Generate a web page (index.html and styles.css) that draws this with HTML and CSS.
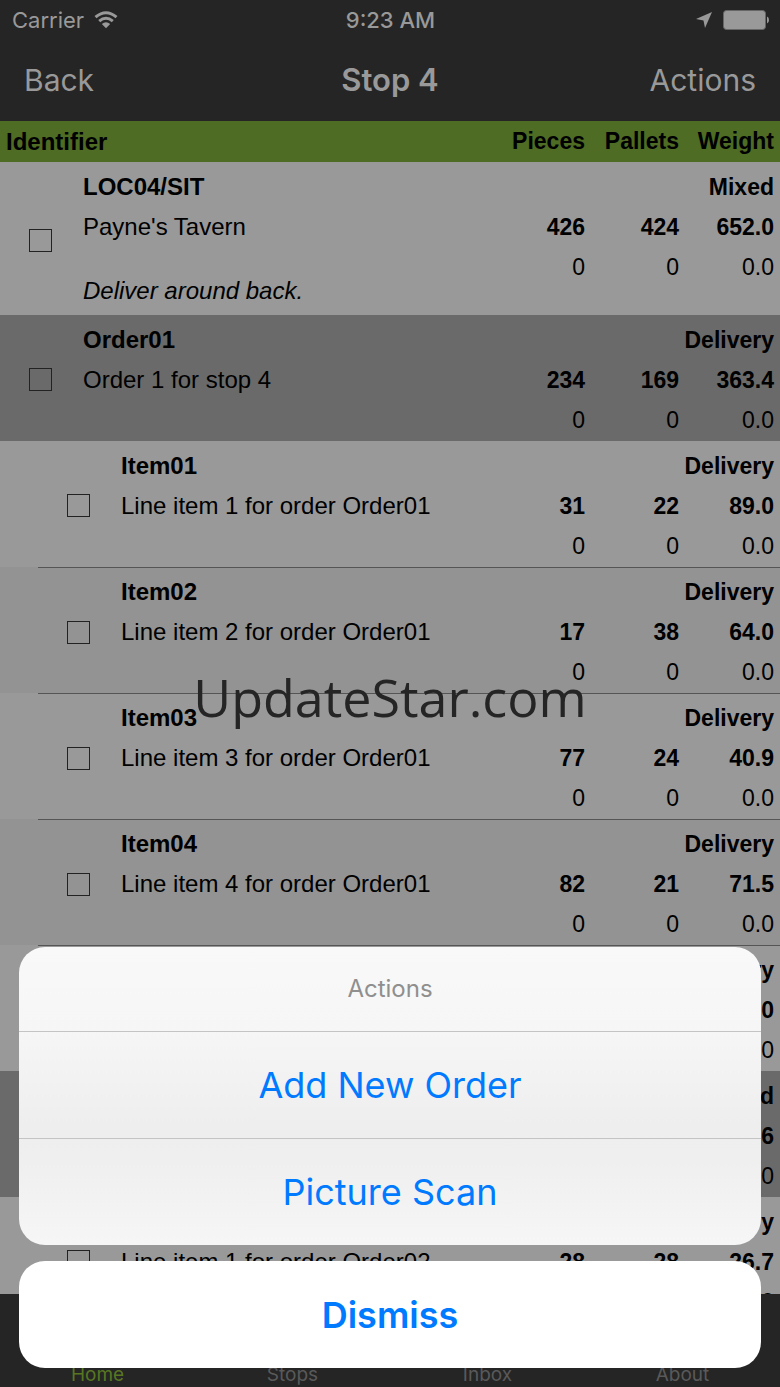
FILE: index.html
```html
<!DOCTYPE html>
<html lang="en">
<head>
    <meta charset="UTF-8">
    <meta name="viewport" content="width=device-width, initial-scale=1.0">
    <title>Stop 4</title>
    <link rel="stylesheet" href="styles.css">
</head>
<body>
    <div class="screen">
        <div class="status-bar">
            <div class="carrier">
                <span>Carrier</span>
                <svg class="wifi" viewBox="0 0 24 18" width="24" height="18" aria-hidden="true">
                    <path d="M1.500 6.200Q12 -2.800 22.500 6.200" />
                    <path d="M5.200 10.200Q12 4.400 18.800 10.200" />
                    <path class="dot" d="M7.800 13Q12 9.300 16.200 13L12 17.200Z" />
                </svg>
            </div>
            <div class="clock">9:23 AM</div>
            <div class="status-icons">
                <svg viewBox="0 0 16 16" width="16" height="16" aria-hidden="true">
                    <path d="M0 7L16 0L9 16L7.500 8.500Z" fill="#999" />
                </svg>
                <svg viewBox="0 0 46 20" width="46" height="20" aria-hidden="true">
                    <rect x="0.500" y="0.500" width="42" height="19" rx="3" fill="#999" stroke="#666" />
                    <path d="M44 6.500Q46 7 46 10T44 13.500Z" fill="#999" />
                </svg>
            </div>
        </div>

        <header class="nav-bar">
            <button class="nav-btn">Back</button>
            <h1>Stop 4</h1>
            <button class="nav-btn right">Actions</button>
        </header>

        <main class="list">
            <table>
                <colgroup>
                    <col class="col-gutter">
                    <col class="col-check">
                    <col class="col-gutter">
                    <col>
                    <col class="col-num">
                    <col class="col-num">
                    <col class="col-weight">
                </colgroup>
                <thead>
                    <tr>
                        <th colspan="4" class="identifier">Identifier</th>
                        <th>Pieces</th>
                        <th>Pallets</th>
                        <th>Weight</th>
                    </tr>
                </thead>
                <tbody class="stop">
                    <tr class="first">
                        <td colspan="2" rowspan="4" class="select"><input type="checkbox" aria-label="LOC04/SIT"></td>
                        <td colspan="2" class="name">LOC04/SIT</td>
                        <td colspan="3" class="type">Mixed</td>
                    </tr>
                    <tr class="planned">
                        <td colspan="2" class="desc">Payne's Tavern</td>
                        <td>426</td><td>424</td><td>652.0</td>
                    </tr>
                    <tr class="actual">
                        <td colspan="2" rowspan="2" class="desc note">Deliver around back.</td>
                        <td>0</td><td>0</td><td>0.0</td>
                    </tr>
                    <tr class="spacer"><td colspan="3"></td></tr>
                </tbody>
                <tbody class="order">
                    <tr class="first">
                        <td colspan="2" rowspan="3" class="select"><input type="checkbox" aria-label="Order01"></td>
                        <td colspan="2" class="name">Order01</td>
                        <td colspan="3" class="type">Delivery</td>
                    </tr>
                    <tr class="planned">
                        <td colspan="2" class="desc">Order 1 for stop 4</td>
                        <td>234</td><td>169</td><td>363.4</td>
                    </tr>
                    <tr class="actual">
                        <td colspan="2"></td>
                        <td>0</td><td>0</td><td>0.0</td>
                    </tr>
                </tbody>
                <tbody class="item">
                    <tr class="first">
                        <td rowspan="3"></td>
                        <td colspan="2" rowspan="3" class="select"><input type="checkbox" aria-label="Item01"></td>
                        <td class="name">Item01</td>
                        <td colspan="3" class="type">Delivery</td>
                    </tr>
                    <tr class="planned">
                        <td class="desc">Line item 1 for order Order01</td>
                        <td>31</td><td>22</td><td>89.0</td>
                    </tr>
                    <tr class="actual">
                        <td></td>
                        <td>0</td><td>0</td><td>0.0</td>
                    </tr>
                </tbody>
                <tbody class="item alt">
                    <tr class="first">
                        <td rowspan="3"></td>
                        <td colspan="2" rowspan="3" class="select"><input type="checkbox" aria-label="Item02"></td>
                        <td class="name">Item02</td>
                        <td colspan="3" class="type">Delivery</td>
                    </tr>
                    <tr class="planned">
                        <td class="desc">Line item 2 for order Order01</td>
                        <td>17</td><td>38</td><td>64.0</td>
                    </tr>
                    <tr class="actual">
                        <td></td>
                        <td>0</td><td>0</td><td>0.0</td>
                    </tr>
                </tbody>
                <tbody class="item">
                    <tr class="first">
                        <td rowspan="3"></td>
                        <td colspan="2" rowspan="3" class="select"><input type="checkbox" aria-label="Item03"></td>
                        <td class="name">Item03</td>
                        <td colspan="3" class="type">Delivery</td>
                    </tr>
                    <tr class="planned">
                        <td class="desc">Line item 3 for order Order01</td>
                        <td>77</td><td>24</td><td>40.9</td>
                    </tr>
                    <tr class="actual">
                        <td></td>
                        <td>0</td><td>0</td><td>0.0</td>
                    </tr>
                </tbody>
                <tbody class="item alt">
                    <tr class="first">
                        <td rowspan="3"></td>
                        <td colspan="2" rowspan="3" class="select"><input type="checkbox" aria-label="Item04"></td>
                        <td class="name">Item04</td>
                        <td colspan="3" class="type">Delivery</td>
                    </tr>
                    <tr class="planned">
                        <td class="desc">Line item 4 for order Order01</td>
                        <td>82</td><td>21</td><td>71.5</td>
                    </tr>
                    <tr class="actual">
                        <td></td>
                        <td>0</td><td>0</td><td>0.0</td>
                    </tr>
                </tbody>
                <tbody class="item">
                    <tr class="first">
                        <td rowspan="3"></td>
                        <td colspan="2" rowspan="3" class="select"><input type="checkbox" aria-label="Item05"></td>
                        <td class="name">Item05</td>
                        <td colspan="3" class="type">Delivery</td>
                    </tr>
                    <tr class="planned">
                        <td class="desc">Line item 5 for order Order01</td>
                        <td>27</td><td>64</td><td>98.0</td>
                    </tr>
                    <tr class="actual">
                        <td></td>
                        <td>0</td><td>0</td><td>0.0</td>
                    </tr>
                </tbody>
                <tbody class="order">
                    <tr class="first">
                        <td colspan="2" rowspan="3" class="select"><input type="checkbox" aria-label="Order02"></td>
                        <td colspan="2" class="name">Order02</td>
                        <td colspan="3" class="type">Mixed</td>
                    </tr>
                    <tr class="planned">
                        <td colspan="2" class="desc">Order 2 for stop 4</td>
                        <td>192</td><td>255</td><td>288.6</td>
                    </tr>
                    <tr class="actual">
                        <td colspan="2"></td>
                        <td>0</td><td>0</td><td>0.0</td>
                    </tr>
                </tbody>
                <tbody class="item">
                    <tr class="first">
                        <td rowspan="3"></td>
                        <td colspan="2" rowspan="3" class="select"><input type="checkbox" aria-label="Item01 of Order02"></td>
                        <td class="name">Item01</td>
                        <td colspan="3" class="type">Delivery</td>
                    </tr>
                    <tr class="planned">
                        <td class="desc">Line item 1 for order Order02</td>
                        <td>28</td><td>28</td><td>26.7</td>
                    </tr>
                    <tr class="actual">
                        <td></td>
                        <td>0</td><td>0</td><td>0.0</td>
                    </tr>
                </tbody>
            </table>
        </main>

        <nav class="tab-bar">
            <a href="#home" class="active">Home</a>
            <a href="#stops">Stops</a>
            <a href="#inbox">Inbox</a>
            <a href="#about">About</a>
        </nav>

        <div class="watermark">UpdateStar.com</div>

        <div class="action-sheet" role="dialog" aria-labelledby="sheetTitle">
            <div class="sheet-group">
                <h2 id="sheetTitle">Actions</h2>
                <button class="sheet-btn">Add New Order</button>
                <button class="sheet-btn">Picture Scan</button>
            </div>
            <button class="sheet-btn dismiss">Dismiss</button>
        </div>
    </div>
</body>
</html>
```
FILE: styles.css
```css
:root {
    --bar: #252525;
    --bar-text: #999;
    --green: #4e6c23;
    --blue: #007aff;
    --line: #555;
}

* {
    box-sizing: border-box;
}

body {
    margin: 0;
    font-family: Inter, Roboto, sans-serif;
    background-color: var(--bar);
}

button {
    border: none;
    background: none;
    padding: 0;
    font-family: inherit;
    cursor: pointer;
}

.screen {
    position: relative;
    display: flex;
    flex-direction: column;
    height: 100vh;
    overflow: hidden;
}

/* Status bar */
.status-bar {
    display: grid;
    grid-template-columns: 1fr auto 1fr;
    align-items: center;
    height: 40px;
    padding: 0 11px 0 12px;
    font-size: 22px;
    color: var(--bar-text);
    flex-shrink: 0;
}

.carrier {
    display: flex;
    align-items: center;
    gap: 10px;
}

.wifi path {
    fill: none;
    stroke: var(--bar-text);
    stroke-width: 3;
}

.wifi .dot {
    fill: var(--bar-text);
    stroke: none;
}

.clock {
    font-weight: 500;
}

.status-icons {
    display: flex;
    justify-content: flex-end;
    align-items: center;
    gap: 11px;
}

/* Navigation bar */
.nav-bar {
    display: grid;
    grid-template-columns: 1fr auto 1fr;
    align-items: center;
    height: 81px;
    padding: 0 24px 2px;
    color: var(--bar-text);
    flex-shrink: 0;
}

.nav-bar h1 {
    margin: 0;
    font-size: 31px;
    font-weight: 600;
}

.nav-btn {
    font-size: 30px;
    color: var(--bar-text);
    text-align: left;
}

.nav-btn.right {
    text-align: right;
}

/* Stop list */
.list {
    flex: 1;
    min-height: 0;
    overflow: hidden;
    background-color: #999;
}

table {
    width: 100%;
    table-layout: fixed;
    border-collapse: separate;
    border-spacing: 0;
    font-family: "Liberation Sans", Arial, sans-serif;
    font-size: 23px;
    color: #000;
}

.col-gutter {
    width: 38px;
}

.col-check {
    width: 45px;
}

.col-num {
    width: 94px;
}

.col-weight {
    width: 95px;
}

th {
    height: 41px;
    padding: 0 6px 0 0;
    background-color: var(--green);
    text-align: right;
}

th.identifier {
    padding-left: 6px;
    font-size: 24px;
    text-align: left;
}

td {
    height: 40px;
    padding: 0 6px 0 0;
    line-height: 40px;
    text-align: right;
    white-space: nowrap;
}

.first td {
    height: 45px;
    padding-top: 5px;
}

.first .select {
    padding: 3px 0 0 29px;
    line-height: 0;
    text-align: left;
}

.first td,
.planned td {
    font-weight: bold;
}

.actual td {
    height: 41px;
    vertical-align: top;
}

td.name,
td.desc {
    padding-right: 0;
    font-size: 24px;
    text-align: left;
}

td.desc {
    font-weight: normal;
}

.stop .actual td {
    height: 40px;
}

.stop .actual .note {
    padding-bottom: 4px;
    font-style: italic;
    vertical-align: bottom;
}

.spacer td {
    height: 28px;
    line-height: 1;
}

.order {
    background-color: #6a6a6a;
}

.alt {
    background-color: #939393;
}

/* the line starts after the gutter column */
.item + .item .first td:not(:first-child) {
    border-top: 1px solid var(--line);
}

.item + .item .first td:not(.select) {
    padding-top: 4px;
}

input[type="checkbox"] {
    appearance: none;
    width: 23px;
    height: 23px;
    margin: 0;
    border: 1px solid #222;
}

/* Tab bar */
.tab-bar {
    display: flex;
    align-items: flex-end;
    height: 93px;
    padding-bottom: 1px;
    background-color: var(--bar);
    flex-shrink: 0;
}

.tab-bar a {
    flex: 1;
    font-size: 19px;
    line-height: 22px;
    text-align: center;
    text-decoration: none;
    color: #595959;
}

.tab-bar .active {
    color: #587622;
}

.watermark {
    position: absolute;
    top: 50%;
    left: 0;
    right: 0;
    transform: translateY(-50%);
    padding-top: 6px;
    font-family: "Open Sans", "Noto Sans", sans-serif;
    font-size: 52px;
    line-height: 72px;
    text-align: center;
    color: #252525;
    pointer-events: none;
}

/* Action sheet */
.action-sheet {
    position: absolute;
    left: 19px;
    right: 19px;
    bottom: 19px;
    display: flex;
    flex-direction: column;
    gap: 16px;
}

.sheet-group {
    border-radius: 26px;
    overflow: hidden;
    background: linear-gradient(#f9f9f9, #f6f6f6 28%, #eee 60%, #efefef 72%, #f6f6f6);
}

.sheet-group h2 {
    margin: 0;
    font-size: 24px;
    font-weight: 400;
    line-height: 84px;
    text-align: center;
    color: #8f8f8f;
}

.sheet-btn {
    display: block;
    width: 100%;
    height: 107px;
    border-top: 1px solid #c4c4c4;
    font-size: 36px;
    color: var(--blue);
}

.dismiss {
    border: none;
    border-radius: 26px;
    background-color: #fff;
    font-weight: 600;
}
```
